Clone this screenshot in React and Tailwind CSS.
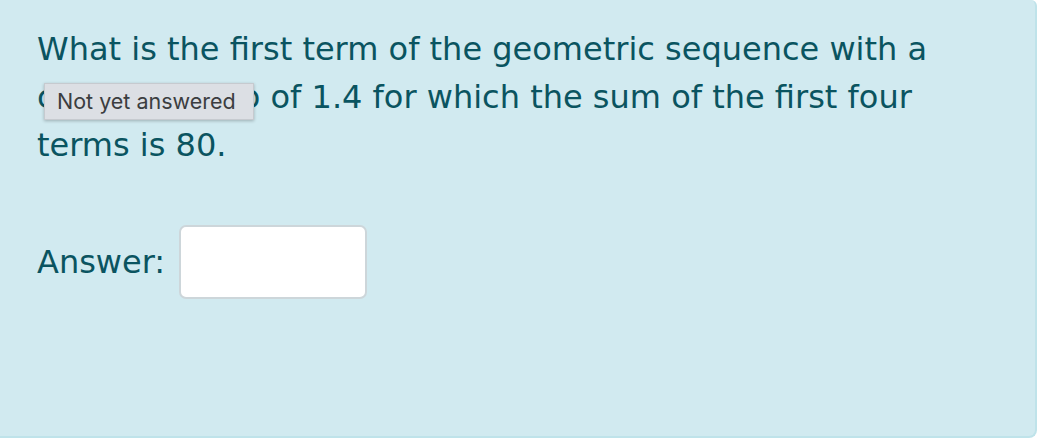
export default function App() {
  return (
    <div className="w-[1038px] h-[440px] bg-white">
      <div className="relative w-[1037px] h-[438px] bg-[#d1eaf0] border-r-2 border-b-2 border-[#bfe3ea] rounded-tr-[6px] rounded-br-[8px] pl-[37px] pt-[25px] text-[#0a5460] font-['DejaVu_Sans',Verdana,sans-serif]">
        <div className="text-[32px] leading-[48px]">
          <div>What is the first term of the geometric sequence with a</div>
          <div>common ratio of 1.4 for which the sum of the first four</div>
          <div>terms is 80.</div>
        </div>
        <div className="flex items-center mt-[56px] gap-[14px]">
          <span className="text-[32px]">Answer:</span>
          <div className="w-[188px] h-[74px] bg-white border-2 border-[#cdd6da] rounded-[7px]" />
        </div>
        <div className="absolute left-[44px] top-[83px] w-[210px] h-[37px] bg-[#dcdfe4] border border-[#c6cacf] shadow-[0_1px_3px_rgba(0,0,0,0.25)] flex items-center pl-[12px] text-[#3b3d40] text-[21.5px] font-['Inter','Liberation_Sans',sans-serif]">
          Not yet answered
        </div>
      </div>
    </div>
  );
}
